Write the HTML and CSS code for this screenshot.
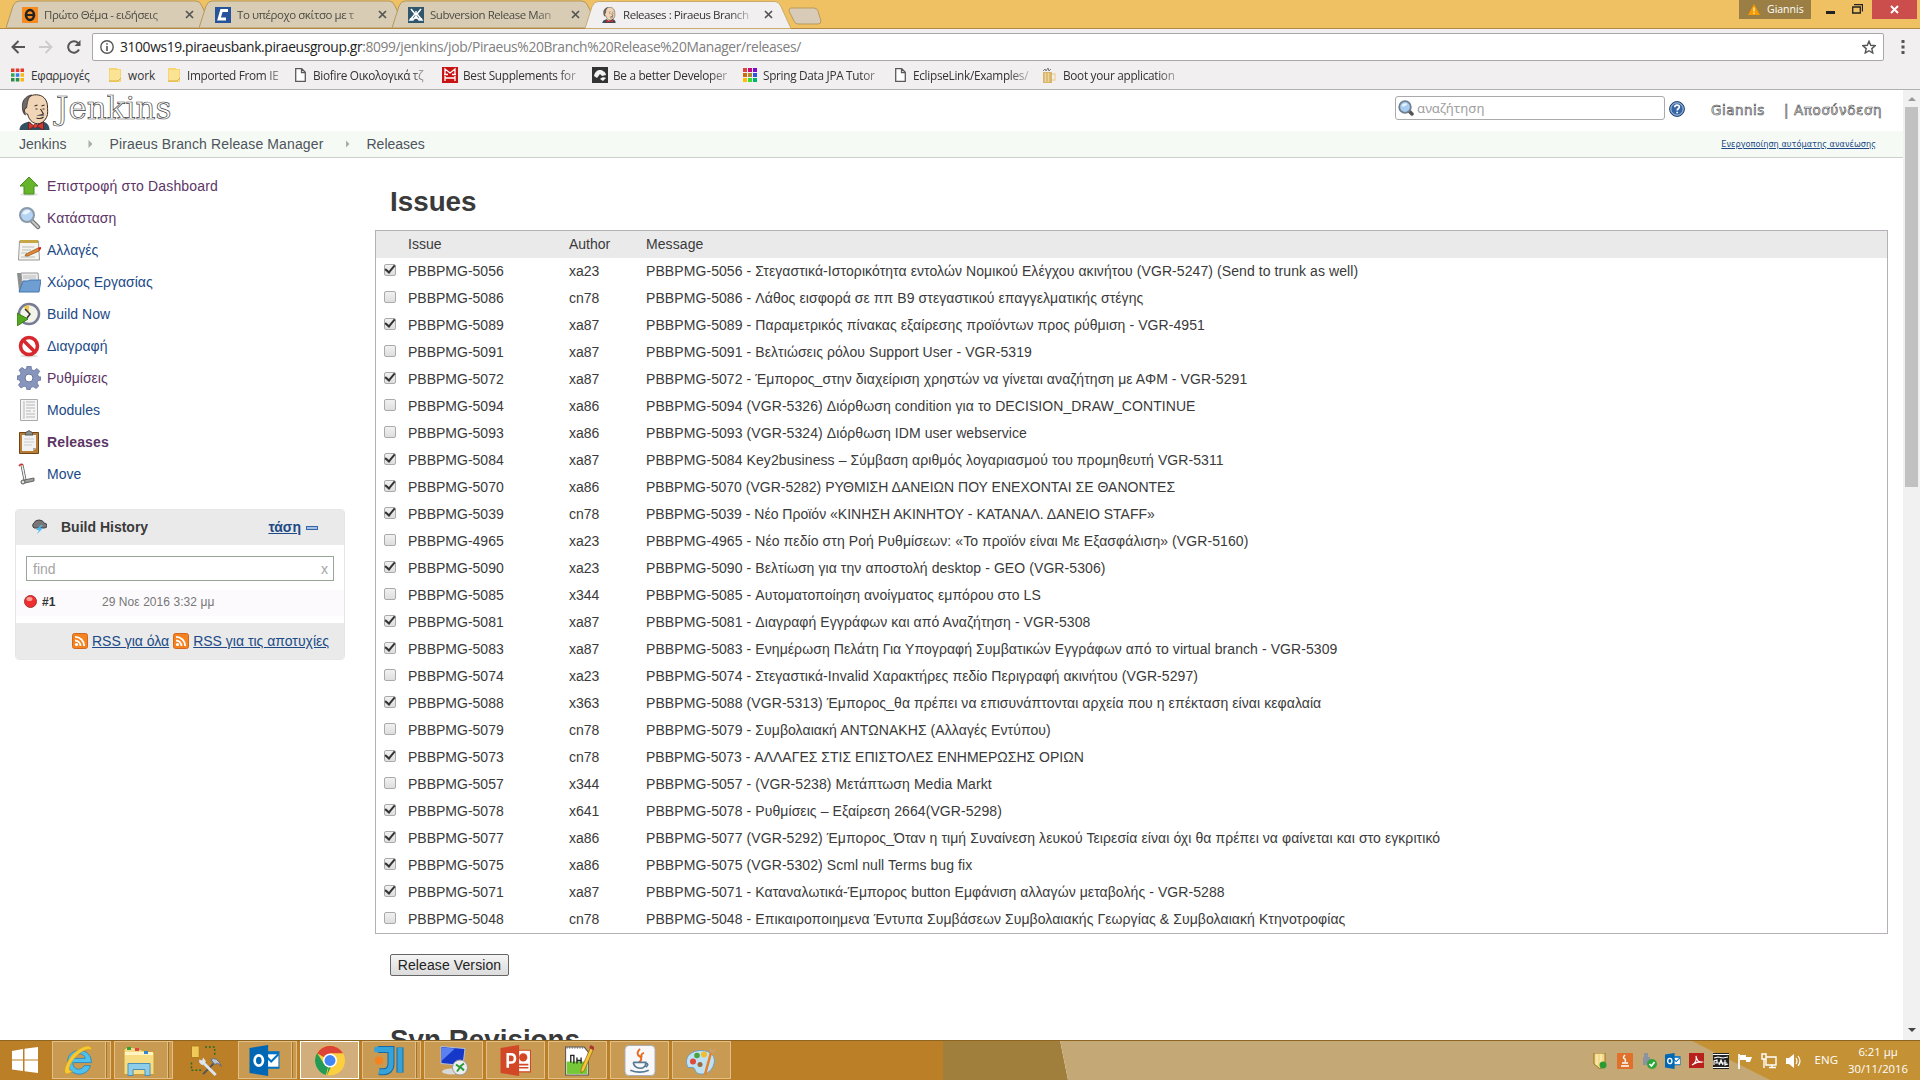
FILE: index.html
```html
<!DOCTYPE html>
<html lang="el">
<head>
<meta charset="utf-8">
<title>Releases : Piraeus Branch Release Manager</title>
<link rel="stylesheet" href="styles.css">
</head>
<body>
<svg width="0" height="0" class="defs" aria-hidden="true">
  <defs>
    <symbol id="head" viewBox="0 0 32 36"><path d="M1 36c0-5 4-7 8-8l14-1c5 1 8 4 8 9z" fill="#335061"/><path d="M11 27l5 7 6-7z" fill="#fff"/><path d="M7 8C9 2 15 0 20 1c6 1 9 6 9 12 0 4 1 8-2 12-3 5-9 6-13 3-3-2-4-5-5-8-3 0-4-4-2-6z" fill="#f0d6b7" stroke="#3a2c24" stroke-width="1"/><path d="M4 14C3 7 7 2 13 1 9 4 9 9 8 14c-3 0-3 4-1 7-2-1-3-4-3-7z" fill="#6d6b6d" stroke="#3a2c24" stroke-width=".8"/><path d="M16 12l3-1M23 12l3-1M17 15h2M24 15h2M22 15l3 5-3 1M18 24c3 1 5 1 7-1" fill="none" stroke="#3a2c24" stroke-width="1.1"/><path d="M18 22c2-2 6-2 8 0z" fill="#6d6b6d"/><path d="M16 32l-6-4v8zM18 32l7-4v8z" fill="#d33833" stroke="#5a1512" stroke-width=".6"/><circle cx="17" cy="32" r="2" fill="#ef3d3a" stroke="#5a1512" stroke-width=".6"/></symbol>
    <symbol id="tab" viewBox="0 0 206 28"><path d="M0 28L7 6Q9 1 13 1H190Q194 1 196 6L206 28Z"/></symbol>
    <symbol id="folder" viewBox="0 0 12 14"><path d="M0 0h8v1h4v13H0z" fill="#f5d672"/><path d="M1 2h10v11H1z" fill="#fbe396"/><path d="M0 13h9l3-3" fill="none" stroke="#d9ae3c"/></symbol>
    <symbol id="page" viewBox="0 0 11 14"><path d="M.7.7h6l3.6 3.6v9H.7z M6.5.7v4h4" fill="#fff" stroke="#5a5a5a" stroke-width="1.3"/></symbol>
    <symbol id="lens" viewBox="0 0 24 24"><path d="M15 15l6 6" stroke="#777" stroke-width="4.5" stroke-linecap="round"/><path d="M15 15l6 6" stroke="#c8c8c8" stroke-width="2" stroke-linecap="round"/><circle cx="10" cy="9" r="7" fill="#b5d3f3" stroke="#8a9aa8" stroke-width="2"/><path d="M5.500 8a5 5 0 0 1 8-3c-2 3-5 4-8 3z" fill="#e9f4ff"/></symbol>
    <symbol id="smalllens" viewBox="0 0 16 16"><path d="M10 10l4 4" stroke="#555" stroke-width="3.500" stroke-linecap="round"/><circle cx="7" cy="7" r="5.800" fill="#a9cdf2" stroke="#6f7f8d" stroke-width="1.800"/><path d="M3.500 6a4 4 0 0 1 6-2c-2 2-4 3-6 2z" fill="#e9f4ff"/></symbol>
    <symbol id="rss" viewBox="0 0 16 16"><rect x=".5" y=".5" width="15" height="15" rx="2" fill="#f58220" stroke="#d2691e"/><circle cx="4.500" cy="11.500" r="1.600" fill="#fff"/><path d="M3 7.500a5.500 5.500 0 0 1 5.500 5.500M3 3.800A9.200 9.200 0 0 1 12.200 13" fill="none" stroke="#fff" stroke-width="1.800"/></symbol>
    <symbol id="mailbox" viewBox="0 0 30 30"><path d="M13 6h16v17H13z" fill="#0072c6"/><path d="M14 9h14v12H14z" fill="#fff"/><path d="M15 10l6 6 7-7" fill="none" stroke="#0072c6" stroke-width="2"/><path d="M0 3L18 0v30L0 27z" fill="#0067b5"/><ellipse cx="9" cy="15" rx="4" ry="5" fill="none" stroke="#fff" stroke-width="2.600"/></symbol>
  </defs>
</svg>

<header class="strip">
  <div class="tabs">
    <div class="tab"><svg class="shape"><use href="#tab"/></svg><svg class="fav" viewBox="0 0 16 16"><rect width="16" height="16" fill="#f78b1f"/><ellipse cx="8" cy="8" rx="4" ry="5" fill="none" stroke="#222" stroke-width="2.600"/><path d="M4 8h8" stroke="#222" stroke-width="2"/></svg><span class="title">Πρώτο Θέμα - ειδήσεις</span><svg class="close" viewBox="0 0 9 9"><path d="M1 1l7 7M8 1L1 8"/></svg></div>
    <div class="tab"><svg class="shape"><use href="#tab"/></svg><svg class="fav" viewBox="0 0 16 16"><rect width="16" height="16" fill="#27539b"/><path d="M13 3.500H6.500L4 12h7" fill="none" stroke="#fff" stroke-width="2.800"/></svg><span class="title">Το υπέροχο σκίτσο με τ</span><svg class="close" viewBox="0 0 9 9"><path d="M1 1l7 7M8 1L1 8"/></svg></div>
    <div class="tab"><svg class="shape"><use href="#tab"/></svg><svg class="fav" viewBox="0 0 16 16"><rect width="16" height="16" fill="#2f566c"/><path d="M3 2l4 5-5 6h3l3-4 3 4h3L9 7l4-5M8 4v8M2 12l3-1M14 12l-3-1" fill="none" stroke="#fff" stroke-width="1.500"/></svg><span class="title">Subversion Release Man</span><svg class="close" viewBox="0 0 9 9"><path d="M1 1l7 7M8 1L1 8"/></svg></div>
    <div class="tab active"><svg class="shape"><use href="#tab"/></svg><svg class="fav"><use href="#head"/></svg><span class="title">Releases : Piraeus Branch</span><svg class="close" viewBox="0 0 9 9"><path d="M1 1l7 7M8 1L1 8"/></svg></div>
    <svg class="newtab" viewBox="0 0 34 18"><path d="M3 1h23q3 0 4 3l3 10q0 3-3 3H10q-3 0-4-3L1 4q0-3 2-3z" fill="#d8ccb8" stroke="#b79a5c"/></svg>
  </div>
  <div class="wincontrols">
    <div class="profile"><svg viewBox="0 0 12 11"><path d="M6 0l6 11H0z" fill="#f79a00"/><path d="M6 3.500v4M6 8.500v1.500" stroke="#fff3c0" stroke-width="1.300"/></svg><span>Giannis</span></div>
    <svg class="min" viewBox="0 0 9 3"><path d="M0 0h9v3H0z" fill="#222"/></svg>
    <svg class="restore" viewBox="0 0 11 10"><path d="M2 .5h8.500v7M.7 3h7.600v6H.7z" fill="none" stroke="#222" stroke-width="1.300"/></svg>
    <div class="winclose"><svg viewBox="0 0 9 9"><path d="M1 1l7 7M8 1L1 8" stroke="#fff" stroke-width="1.900"/></svg></div>
  </div>
</header>

<div class="toolbar">
  <svg class="nav" viewBox="0 0 14 14"><path d="M14 7H2M7.500 1L1.500 7l6 6" fill="none" stroke="#555" stroke-width="2"/></svg>
  <svg class="nav" viewBox="0 0 14 14"><path d="M0 7h12M6.500 1l6 6-6 6" fill="none" stroke="#ccc" stroke-width="1.800"/></svg>
  <svg class="nav" viewBox="0 0 14 14"><path d="M12 9.500A5.700 5.700 0 1 1 11 3" fill="none" stroke="#555" stroke-width="2"/><path d="M13.500 0v6h-6z" fill="#555"/></svg>
  <div class="omnibox">
    <svg class="info" viewBox="0 0 14 14"><circle cx="7" cy="7" r="6.200" fill="none" stroke="#555" stroke-width="1.400"/><path d="M7 6v5M7 3.200v1.600" stroke="#555" stroke-width="1.600"/></svg>
    <span class="url"><b>3100ws19.piraeusbank.piraeusgroup.gr</b>:8099/jenkins/job/Piraeus%20Branch%20Release%20Manager/releases/</span>
    <svg class="star" viewBox="0 0 14 14"><path d="M7 1.200l1.700 4.100 4.500.4-3.400 2.900 1 4.400L7 10.700 3.200 13l1-4.400L.8 5.700l4.500-.4z" fill="none" stroke="#555" stroke-width="1.400"/></svg>
  </div>
  <svg class="menu" viewBox="0 0 4 14"><path d="M.5 0h3v3h-3zM.5 5.500h3v3h-3zM.5 11h3v3h-3z" fill="#555"/></svg>
</div>

<nav class="bookmarks">
  <a class="m1"><svg viewBox="0 0 13 13"><path d="M0 0h3.500v3.500H0zM4.800 0h3.500v3.500H4.800zM9.500 0H13v3.500H9.500z" fill="#e33b2e"/><path d="M0 4.800h3.500v3.500H0z" fill="#2da94f"/><path d="M4.800 4.800h3.500v3.500H4.800z" fill="#3b7ded"/><path d="M9.500 4.800H13v3.500H9.500zM9.500 9.500H13V13H9.500z" fill="#f6b913"/><path d="M0 9.500h3.500V13H0zM4.800 9.500h3.500V13H4.800z" fill="#2d8f47"/></svg><span>Εφαρμογές</span></a>
  <a class="m2"><svg><use href="#folder"/></svg><span>work</span></a>
  <a class="m3"><svg><use href="#folder"/></svg><span>Imported From IE</span></a>
  <a class="m4"><svg><use href="#page"/></svg><span>Biofire Οικολογικά τζ</span></a>
  <a class="m5"><svg viewBox="0 0 16 16"><rect width="16" height="16" fill="#c81414"/><path d="M3 7V2l5 4 5-4v5M3 9v5M13 9v5M3 11h10M2 7.500h4M10 7.500h4" fill="none" stroke="#fff" stroke-width="1.300"/></svg><span>Best Supplements for</span></a>
  <a class="m6"><svg viewBox="0 0 16 16"><rect width="16" height="16" fill="#333"/><path d="M2 9c1-5 4-6 6-6s6 2 6 5l-4 1-2-2-3 4zM8 12c2-2 4-2 6-1l-3 3z" fill="#f2f2f2"/></svg><span>Be a better Developer</span></a>
  <a class="m7"><svg viewBox="0 0 14 14"><path d="M0 0h4v4H0z" fill="#e34040"/><path d="M5 0h4v4H5z" fill="#c60b7a"/><path d="M10 0h4v4h-4z" fill="#7a0bd0"/><path d="M0 5h4v4H0z" fill="#cc6b14"/><path d="M5 5h4v4H5z" fill="#b08a30"/><path d="M10 5h4v4h-4z" fill="#3253e0"/><path d="M0 10h4v4H0z" fill="#ffbf00"/><path d="M5 10h4v4H5z" fill="#3cdc32"/><path d="M10 10h4v4h-4z" fill="#00b46e"/></svg><span>Spring Data JPA Tutor</span></a>
  <a class="m8"><svg><use href="#page"/></svg><span>EclipseLink/Examples/</span></a>
  <a class="m9"><svg viewBox="0 0 15 16"><path d="M1 5h9v11H1z" fill="#d8b56b"/><path d="M10 7h3v6h-3M3.500 6v9M6.500 6v9" fill="none" stroke="#ecd6a2" stroke-width="1.500"/><path d="M1 4l2-2 1 2 2-3 1 3 2-2" fill="none" stroke="#777"/></svg><span>Boot your application</span></a>
</nav>

<div class="viewport">
  <div class="page">
    <div class="topbar">
      <svg class="logo"><use href="#head"/></svg>
      <span class="brand">Jenkins</span>
      <div class="search"><svg><use href="#smalllens"/></svg><span>αναζήτηση</span></div>
      <svg class="help" viewBox="0 0 16 16"><circle cx="8" cy="8" r="7.400" fill="#3465a4" stroke="#1d3f72"/><circle cx="8" cy="8" r="6.200" fill="none" stroke="#d6e2f2" stroke-width=".8"/><path d="M5.800 6.300c0-3 4.500-2.800 4.500-.2 0 1.700-2.100 1.600-2.100 3.300M8.200 10.700v1.600" fill="none" stroke="#fff" stroke-width="1.700"/></svg>
      <a class="user">Giannis</a>
      <a class="logout">| Αποσύνδεση</a>
    </div>
    <div class="crumbs">
      <a>Jenkins</a><i></i><a class="job">Piraeus Branch Release Manager</a><i></i><a>Releases</a>
      <a class="refresh">Ενεργοποίηση αυτόματης ανανέωσης</a>
    </div>
    <div class="columns">
      <aside>
        <ul class="tasks">
          <li class="seen wide"><svg viewBox="0 0 24 24"><ellipse cx="12" cy="20.500" rx="9" ry="1.500" fill="#ddd"/><path d="M12 3l9 9h-4v8H7v-8H3z" fill="#66b52c" stroke="#4a8f1c"/></svg>Επιστροφή στο Dashboard</li>
          <li class="seen"><svg><use href="#lens"/></svg>Κατάσταση</li>
          <li><svg viewBox="0 0 24 24"><path d="M2.500 3h19l1 19H1.500z" fill="#f4f4ef" stroke="#999"/><path d="M3 2h18v3H3z" fill="#c7a646"/><path d="M5 9h12M5 12h9M4 15h6M4 19h14" stroke="#bbb"/><path d="M9 16l12-6 2 1-1 2-11 5-3 0z" fill="#e08a35" stroke="#8a5120" stroke-width=".7"/><path d="M21 9.500l3-.5v2l-2 1.500z" fill="#d22"/></svg>Αλλαγές</li>
          <li><svg viewBox="0 0 24 24"><path d="M0 3h7l2 2v16H2z" fill="#8c8f8d"/><path d="M4 3h17l1 11H5z" fill="#eee" stroke="#999"/><path d="M6 6h13M6 8h13" stroke="#bbb"/><path d="M6 11h5l2-1h11l-2 12H2z" fill="#6f9fd2" stroke="#4577ad"/></svg>Χώρος Εργασίας</li>
          <li><svg viewBox="0 0 24 24"><circle cx="12" cy="12" r="10" fill="#f3f3ec" stroke="#777b93" stroke-width="2.500"/><path d="M12 12L7 5a8 8 0 0 1 5-2z" fill="#efc84a"/><path d="M8 7l5 5-3 4" fill="none" stroke="#333" stroke-width="1.500"/><path d="M0 11l11 6L0 24z" fill="#52a820" stroke="#3b7d14"/></svg>Build Now</li>
          <li><svg viewBox="0 0 24 24"><ellipse cx="12" cy="22" rx="9" ry="1.500" fill="#ddd"/><circle cx="12" cy="12" r="8.500" fill="#fff" stroke="#d7282d" stroke-width="3.600"/><path d="M6 6l12 12" stroke="#d7282d" stroke-width="3.600"/></svg>Διαγραφή</li>
          <li class="seen"><svg viewBox="0 0 24 24"><path d="M10 0h4l.6 3.700 2.400 1 3-2.200 2.700 2.800-2.100 3 1 2.400L24 11v3l-3 .6-1 2.400 1.700 3-2.600 2.400-3-1.800-2.300.9L13 24h-3l-.6-3-2.400-.9-3 1.900L1.500 19l2-2.700-.9-2.300L0 13.500V10l3-.5 1-2.400-2-3L5 1.500l2.700 2 1.800-.7z" fill="#8795bd" stroke="#66759e" stroke-width=".8"/><circle cx="12" cy="12" r="4" fill="#fff" stroke="#66759e"/></svg>Ρυθμίσεις</li>
          <li><svg viewBox="0 0 24 24"><path d="M3.500 1.500h17v21h-17z" fill="#f5f5f5" stroke="#aaa"/><path d="M6 4h1v16H6M9 4h9M9 7h9M9 10h9M9 13h5M9 16h9M9 19h9M16 13h2" fill="none" stroke="#ccc" stroke-width="1.500"/></svg>Modules</li>
          <li class="seen current"><svg viewBox="0 0 24 24"><path d="M2.500 2.500h19v21h-19z" fill="#b77d36" stroke="#6f4512"/><path d="M5 5h14v13l-3 3H5z" fill="#f2f2f2"/><path d="M7 9h10M7 12h10M7 15h8" stroke="#ccc"/><path d="M8 5l1-3h1q2-3 4 0h1l1 3z" fill="#888f88" stroke="#555"/><path d="M19 18h-3v3z" fill="#aaa"/></svg>Releases</li>
          <li><svg viewBox="0 0 24 24"><path d="M5 3l3 15" stroke="#555" stroke-width="3"/><path d="M5 3l3 15" stroke="#eee" stroke-width="1.500"/><path d="M2 4q2-3 4-1" fill="none" stroke="#c33" stroke-width="1.500"/><path d="M7 18l10-2v3l-9 2z" fill="#9ba39b" stroke="#666"/><circle cx="6" cy="20" r="2" fill="#ddd" stroke="#555"/></svg>Move</li>
        </ul>
        <section class="history">
          <div class="hhead"><svg class="storm" viewBox="0 0 16 16"><path d="M3 9a3 3 0 0 1 0-5q1-3 5-3 4 0 5 3 3 0 3 3 0 2-3 2z" fill="#777" stroke="#444"/><path d="M10 6l-5 5h3l-2 4 6-6H9l3-3z" fill="#4db9f2"/></svg><b>Build History</b><a>τάση</a><i class="dash"></i></div>
          <div class="find"><span>find</span><span>x</span></div>
          <div class="build"><svg viewBox="0 0 13 13"><circle cx="6.500" cy="6.500" r="6" fill="#ef2f2f" stroke="#a33"/><ellipse cx="5.500" cy="4" rx="3" ry="2" fill="#ff9d94"/></svg><b>#1</b><span>29 Νοε 2016 3:32 μμ</span></div>
          <div class="feeds"><svg><use href="#rss"/></svg><a>RSS για όλα</a><svg><use href="#rss"/></svg><a>RSS για τις αποτυχίες</a></div>
        </section>
      </aside>
      <main>
        <h1>Issues</h1>
        <div class="table">
          <div class="row th"><i></i><span>Issue</span><span>Author</span><span>Message</span></div>
          <div class="row"><i class="on"></i><span>PBBPMG-5056</span><span>xa23</span><span>PBBPMG-5056 - Στεγαστικά-Ιστορικότητα εντολών Νομικού Ελέγχου ακινήτου (VGR-5247) (Send to trunk as well)</span></div>
          <div class="row"><i class="off"></i><span>PBBPMG-5086</span><span>cn78</span><span>PBBPMG-5086 - Λάθος εισφορά σε ππ Β9 στεγαστικού επαγγελματικής στέγης</span></div>
          <div class="row"><i class="on"></i><span>PBBPMG-5089</span><span>xa87</span><span>PBBPMG-5089 - Παραμετρικός πίνακας εξαίρεσης προϊόντων προς ρύθμιση - VGR-4951</span></div>
          <div class="row"><i class="off"></i><span>PBBPMG-5091</span><span>xa87</span><span>PBBPMG-5091 - Βελτιώσεις ρόλου Support User - VGR-5319</span></div>
          <div class="row"><i class="on"></i><span>PBBPMG-5072</span><span>xa87</span><span>PBBPMG-5072 - Έμπορος_στην διαχείριση χρηστών να γίνεται αναζήτηση με ΑΦΜ - VGR-5291</span></div>
          <div class="row"><i class="off"></i><span>PBBPMG-5094</span><span>xa86</span><span>PBBPMG-5094 (VGR-5326) Διόρθωση condition για το DECISION_DRAW_CONTINUE</span></div>
          <div class="row"><i class="off"></i><span>PBBPMG-5093</span><span>xa86</span><span>PBBPMG-5093 (VGR-5324) Διόρθωση IDM user webservice</span></div>
          <div class="row"><i class="on"></i><span>PBBPMG-5084</span><span>xa87</span><span>PBBPMG-5084 Key2business – Σύμβαση αριθμός λογαριασμού του προμηθευτή VGR-5311</span></div>
          <div class="row"><i class="on"></i><span>PBBPMG-5070</span><span>xa86</span><span class="caps">PBBPMG-5070 (VGR-5282) ΡΥΘΜΙΣΗ ΔΑΝΕΙΩΝ ΠΟΥ ΕΝΕΧΟΝΤΑΙ ΣΕ ΘΑΝΟΝΤΕΣ</span></div>
          <div class="row"><i class="on"></i><span>PBBPMG-5039</span><span>cn78</span><span class="caps">PBBPMG-5039 - Νέο Προϊόν «ΚΙΝΗΣΗ ΑΚΙΝΗΤΟΥ - ΚΑΤΑΝΑΛ. ΔΑΝΕΙΟ STAFF»</span></div>
          <div class="row"><i class="off"></i><span>PBBPMG-4965</span><span>xa23</span><span>PBBPMG-4965 - Νέο πεδίο στη Ροή Ρυθμίσεων: «Το προϊόν είναι Με Εξασφάλιση» (VGR-5160)</span></div>
          <div class="row"><i class="on"></i><span>PBBPMG-5090</span><span>xa23</span><span>PBBPMG-5090 - Βελτίωση για την αποστολή desktop - GEO (VGR-5306)</span></div>
          <div class="row"><i class="off"></i><span>PBBPMG-5085</span><span>x344</span><span>PBBPMG-5085 - Αυτοματοποίηση ανοίγματος εμπόρου στο LS</span></div>
          <div class="row"><i class="on"></i><span>PBBPMG-5081</span><span>xa87</span><span>PBBPMG-5081 - Διαγραφή Εγγράφων και από Αναζήτηση - VGR-5308</span></div>
          <div class="row"><i class="on"></i><span>PBBPMG-5083</span><span>xa87</span><span>PBBPMG-5083 - Ενημέρωση Πελάτη Για Υπογραφή Συμβατικών Εγγράφων από το virtual branch - VGR-5309</span></div>
          <div class="row"><i class="off"></i><span>PBBPMG-5074</span><span>xa23</span><span>PBBPMG-5074 - Στεγαστικά-Invalid Χαρακτήρες πεδίο Περιγραφή ακινήτου (VGR-5297)</span></div>
          <div class="row"><i class="on"></i><span>PBBPMG-5088</span><span>x363</span><span>PBBPMG-5088 (VGR-5313) Έμπορος_θα πρέπει να επισυνάπτονται αρχεία που η επέκταση είναι κεφαλαία</span></div>
          <div class="row"><i class="off"></i><span>PBBPMG-5079</span><span>cn78</span><span>PBBPMG-5079 - Συμβολαιακή ΑΝΤΩΝΑΚΗΣ (Αλλαγές Εντύπου)</span></div>
          <div class="row"><i class="on"></i><span>PBBPMG-5073</span><span>cn78</span><span class="caps">PBBPMG-5073 - ΑΛΛΑΓΕΣ ΣΤΙΣ ΕΠΙΣΤΟΛΕΣ ΕΝΗΜΕΡΩΣΗΣ ΟΡΙΩΝ</span></div>
          <div class="row"><i class="off"></i><span>PBBPMG-5057</span><span>x344</span><span>PBBPMG-5057 - (VGR-5238) Μετάπτωση Media Markt</span></div>
          <div class="row"><i class="on"></i><span>PBBPMG-5078</span><span>x641</span><span>PBBPMG-5078 - Ρυθμίσεις – Εξαίρεση 2664(VGR-5298)</span></div>
          <div class="row"><i class="on"></i><span>PBBPMG-5077</span><span>xa86</span><span>PBBPMG-5077 (VGR-5292) Έμπορος_Όταν η τιμή Συναίνεση λευκού Τειρεσία είναι όχι θα πρέπει να φαίνεται και στο εγκριτικό</span></div>
          <div class="row"><i class="on"></i><span>PBBPMG-5075</span><span>xa86</span><span>PBBPMG-5075 (VGR-5302) Scml null Terms bug fix</span></div>
          <div class="row"><i class="on"></i><span>PBBPMG-5071</span><span>xa87</span><span>PBBPMG-5071 - Καταναλωτικά-Έμπορος button Εμφάνιση αλλαγών μεταβολής - VGR-5288</span></div>
          <div class="row"><i class="off"></i><span>PBBPMG-5048</span><span>cn78</span><span>PBBPMG-5048 - Επικαιροποιημενα Έντυπα Συμβάσεων Συμβολαιακής Γεωργίας &amp; Συμβολαιακή Κτηνοτροφίας</span></div>
        </div>
        <button class="release" type="button">Release Version</button>
        <h1 class="svn">Svn Revisions</h1>
      </main>
    </div>
  </div>
  <div class="scroll">
    <svg viewBox="0 0 8 4"><path d="M4 0l4 4H0z" fill="#999"/></svg>
    <div class="thumb"></div>
    <svg class="down" viewBox="0 0 8 4"><path d="M0 0h8L4 4z" fill="#444"/></svg>
  </div>
</div>

<footer class="taskbar">
  <svg class="wallpaper" viewBox="0 0 1920 40" preserveAspectRatio="none"><path d="M0 0h943v40H0z" fill="#bb7f27"/><path d="M943 0h117l8 40H943z" fill="#a07f3c"/><path d="M1060 0h636l79 40h-707z" fill="#c4a876"/><path d="M1690 0h230v40h-150z" fill="#c49235"/><path d="M0 0h1920v1H0z" fill="#8d6420"/></svg>
  <div class="start"><svg viewBox="0 0 26 26"><path d="M0 4l11-2v10.500H0zM12.500 1.700L26 0v12.500H12.500zM0 13.500h11V24L0 22.500zM12.500 13.500H26V26l-13.500-1.700z" fill="#fff"/></svg></div>
  <div class="apps">
    <div class="app stack"><svg viewBox="0 0 30 30"><path d="M27 17H9c0 8 9 8 11 3h6c-3 12-22 11-22-4C4 2 27 1 27 17zM10 13h11c-1-6-10-6-11 0z" fill="#4fc1ee" stroke="#2386bd" stroke-width=".8"/><path d="M27 5c1-7-10-4-18 4C2 17-1 27 3 28c2 0 4-1 6-3-4 1-5-3 0-10C14 8 23 2 27 5z" fill="#f9c932" stroke="#c9971c" stroke-width=".5"/></svg></div>
    <div class="app stack double"><svg viewBox="0 0 32 30"><path d="M1 4l4-3 9 2 6 2 11 2v22H1z" fill="#f6dd83" stroke="#c59c38"/><path d="M2 8h28" stroke="#fff4c2" stroke-width="3"/><path d="M4 3h4" stroke="#35a040" stroke-width="3"/><path d="M12 4h4" stroke="#d44" stroke-width="3"/><path d="M21 7h4" stroke="#38c" stroke-width="3"/><path d="M5 30V18h22v12h-5v-6H10v6z" fill="#8dcdea" stroke="#4c91b5"/></svg></div>
    <div class="app flat"><svg viewBox="0 0 32 32"><path d="M1 1h8v12H1z" fill="#f1c95b" stroke="#a87b1c"/><path d="M15 2h10v10M1 18v8h10" fill="none" stroke="#276b25" stroke-width="1.500" stroke-dasharray="2"/><path d="M13 30l14-14" stroke="#555" stroke-width="2"/><path d="M12 17l14 14" stroke="#dce6ef" stroke-width="3"/><path d="M21 15q6-4 11 7l-4-3-3 1z" fill="#b6c8d8" stroke="#667"/><path d="M9 15l3 1 1-3 3 4-4 4-3-3z" fill="#dce6ef"/></svg></div>
    <div class="app stack"><svg><use href="#mailbox"/></svg></div>
    <div class="app current"><svg viewBox="0 0 30 30"><circle cx="15" cy="15" r="14.500" fill="#fbcf3d"/><path d="M15 15L2.500 8A14.500 14.500 0 0 1 27.600 8H15z" fill="#db4437"/><path d="M15 15l-4 14A14.500 14.500 0 0 1 2.500 7.700L9 18l7 3-4 8.500z" fill="#239a55"/><circle cx="15" cy="15" r="6.800" fill="#fff"/><circle cx="15" cy="15" r="5.300" fill="#4285f4"/></svg></div>
    <div class="app stack"><svg viewBox="0 0 32 30"><path d="M5 4h13v14q0 10-12 8M27 2v25" fill="none" stroke="#176aa5" stroke-width="7"/><path d="M5 4h13v14q0 10-12 8M27 2v25" fill="none" stroke="#35a2da" stroke-width="5"/><circle cx="6" cy="15" r="4" fill="#f6821f"/><circle cx="4" cy="4" r="3" fill="#35a2da"/></svg></div>
    <div class="app"><svg viewBox="0 0 32 30"><ellipse cx="13" cy="26" rx="9" ry="3" fill="#d8d8d8"/><path d="M3 1l24 2-2 17-22-2z" fill="#1638c8" stroke="#b9c2d6"/><path d="M4 2l13 1L4 15z" fill="#5b80f0"/><circle cx="22" cy="22" r="7.500" fill="#eee" stroke="#999"/><path d="M18 19l4 3-3 4M26 18l-4 3 4 4" fill="none" stroke="#2b9b3b" stroke-width="2"/></svg></div>
    <div class="app"><svg viewBox="0 0 30 30"><path d="M14 5h15v21H14z" fill="#fff" stroke="#d24726"/><circle cx="22" cy="12" r="4" fill="#d24726"/><path d="M18 19h9M18 22h9" stroke="#d24726" stroke-width="1.500"/><path d="M0 3L18 0v30L0 27z" fill="#d24726"/><path d="M7 22V9h3q4 0 4 4t-4 4H7" fill="none" stroke="#fff" stroke-width="2.500"/></svg></div>
    <div class="app"><svg viewBox="0 0 30 30"><path d="M3 2h18l4 5v22H3z" fill="#fff" stroke="#555"/><path d="M4 16h20v12H4z" fill="#76c936"/><path d="M4 3h16" stroke="#444" stroke-dasharray="1 1.500"/><path d="M8 17v-7h3v8M14 12v6M14 15h4M18 12v6" fill="none" stroke="#222" stroke-width="1.300"/><path d="M27 3l3 1-9 21-3 2v-4z" fill="#f5c43a" stroke="#8a6512" stroke-width=".7"/><path d="M27 0l4 2-1 3-4-2z" fill="#a33"/></svg></div>
    <div class="app"><svg viewBox="0 0 32 32"><rect x=".5" y=".5" width="31" height="31" rx="4" fill="#f8f8fa" stroke="#a9aab5"/><path d="M16 4q-5 5 0 8 3 3-1 6M20 8q-4 2-2 5" fill="none" stroke="#e86a1e" stroke-width="2"/><path d="M9 18h13q0 6-6 6t-7-6M22 19q4 0 0 4M6 26q10 4 19 0" fill="none" stroke="#527a95" stroke-width="1.700"/></svg></div>
    <div class="app"><svg viewBox="0 0 32 30"><path d="M2 22C-3 12 5 5 15 5c10 0 15 6 13 13-2 9-10 12-16 10-4-2-2-6-6-6z" fill="#bfe1f4" stroke="#6f9fbd"/><circle cx="7" cy="16" r="3" fill="#e04a3b"/><circle cx="11" cy="10" r="2.800" fill="#48a23f"/><circle cx="18" cy="9" r="3" fill="#f3bd2b"/><circle cx="14" cy="19" r="2.500" fill="#9a6a3a"/><path d="M25 7l-6 22" stroke="#e87f25" stroke-width="2.500"/><path d="M23 0l3 5 4-2-3 5-3-1z" fill="#caa06b"/></svg></div>
  </div>
  <div class="tray">
    <svg viewBox="0 0 16 16"><path d="M1 0h11v12l-5 4-6-5z" fill="#f5d98a" stroke="#9a7420"/><path d="M4 1v11M8 1v12" stroke="#fff3c9"/><circle cx="10" cy="12" r="3.500" fill="#2c9a33"/></svg>
    <svg viewBox="0 0 16 16"><rect width="16" height="16" rx="1" fill="#e0702a"/><path d="M8 2q-3 3 0 4 1 1 0 3M5 10h6M4 13h8" fill="none" stroke="#fff" stroke-width="1.400"/></svg>
    <svg viewBox="0 0 16 16"><path d="M3 0h4v4h2v5l-3 3H2V4h1z" fill="#8b93a0"/><circle cx="11" cy="11" r="5" fill="#2ea53a"/><path d="M8.500 11l2 2 3-4" fill="none" stroke="#fff" stroke-width="1.700"/></svg>
    <svg><use href="#mailbox"/></svg>
    <svg viewBox="0 0 16 16"><rect width="15" height="15" fill="#b8201c"/><path d="M3 12c4-2 5-6 4-9 1 5 3 7 6 6-4-1-7 1-10 3z" fill="none" stroke="#fff" stroke-width="1.200"/></svg>
    <svg viewBox="0 0 16 16"><rect width="16" height="16" fill="#222"/><path d="M0 1.500h16M0 14.500h16M1 5l4-1 5 1 5-1M1 12V8l3-1v3M6 12l2-5 2 5M12 7v5l3-1M2 10h12" fill="none" stroke="#fff" stroke-width="1.200"/></svg>
    <svg viewBox="0 0 16 16"><path d="M2 1v15" stroke="#fff" stroke-width="1.700"/><path d="M3 2h6v2h6l-2 5H9V7H3z" fill="#fff"/></svg>
    <svg viewBox="0 0 16 16"><path d="M5 4h10v8H5zM8 14.500h7M11 12v3M1 1h4v5H1zM3 6v9" fill="none" stroke="#fff" stroke-width="1.400"/></svg>
    <svg viewBox="0 0 16 16"><path d="M1 5h3l5-4v14l-5-4H1z" fill="#fff"/><path d="M11 5q2 3 0 6M13 3q4 5 0 10" fill="none" stroke="#fff" stroke-width="1.200"/></svg>
    <span class="lang">ENG</span>
    <div class="clock"><span>6:21 μμ</span><span>30/11/2016</span></div>
  </div>
</footer>
</body>
</html>
```
FILE: styles.css
```css
* { box-sizing: border-box; }
body {
  margin: 0;
  width: 1920px;
  height: 1080px;
  overflow: hidden;
  display: flex;
  flex-direction: column;
  background: #fff;
  color: #3a3a3a;
  font: 14px/1 "Liberation Sans", Arial, sans-serif;
}
svg { display: block; flex: none; }
.defs { position: absolute; }
i { font-style: normal; }

/* window frame */
.strip {
  height: 29px;
  flex: none;
  display: flex;
  justify-content: space-between;
  background: #f0c163;
  border-bottom: 1px solid #b08a45;
  font: 12px/1 "Open Sans", "Noto Sans", sans-serif;
}
.tabs { display: flex; padding-left: 6px; }
.tab {
  position: relative;
  width: 193px;
  height: 29px;
  display: flex;
  align-items: center;
  padding: 0 0 0 16px;
  color: #4c4a45;
}
.shape {
  position: absolute;
  left: 0;
  top: 0;
  width: 206px;
  height: 28px;
  fill: #d8cdb4;
  stroke: #b6975a;
  overflow: visible;
}
.active { color: #333; }
.active .shape { fill: #f1eff0; height: 29px; stroke: #c9ab6b; }
.fav { position: relative; width: 16px; height: 16px; margin-right: 6px; }
.title {
  position: relative;
  width: 130px;
  white-space: nowrap;
  line-height: 18px;
  font-size: 11.500px;
  letter-spacing: -.45px;
  mask-image: linear-gradient(90deg, #000 82%, rgba(0, 0, 0, .25) 97%);
}
.close { position: relative; width: 9px; height: 9px; margin-left: 11px; stroke: #555; stroke-width: 1.700; }
.newtab { width: 34px; height: 18px; margin: 7px 0 0 10px; }
.wincontrols { display: flex; align-items: flex-start; padding-right: 3px; }
.profile {
  width: 72px;
  height: 19px;
  display: flex;
  align-items: center;
  padding-left: 9px;
  gap: 7px;
  background: #9b7e43;
  color: #fff;
  font-size: 10.500px;
}
.profile svg { width: 12px; height: 11px; }
.min { width: 9px; height: 3px; margin: 11px 0 0 15px; }
.restore { width: 11px; height: 10px; margin: 4px 0 0 17px; }
.winclose {
  width: 45px;
  height: 19px;
  margin-left: 9px;
  display: grid;
  place-items: center;
  background: #cb4d4c;
}
.winclose svg { width: 9px; height: 9px; }

.toolbar {
  height: 32px;
  flex: none;
  display: flex;
  align-items: center;
  padding: 4px 0 0 11px;
  background: #f1eff0;
}
.nav { width: 14px; height: 14px; margin-right: 14px; }
.nav + .nav + .nav { margin-right: 11px; }
.omnibox {
  width: 1792px;
  height: 28px;
  display: flex;
  align-items: center;
  padding: 0 7px 0 7px;
  background: #fff;
  border: 1px solid #a8a8a8;
  border-radius: 2px;
}
.info { width: 14px; height: 14px; margin-right: 6px; }
.url {
  flex: 1;
  font: 13.800px/20px "Open Sans", "Noto Sans", sans-serif;
  letter-spacing: -.35px;
  color: #808080;
  white-space: nowrap;
}
.url b { font-weight: 400; color: #222; }
.star { width: 14px; height: 14px; }
.menu { width: 4px; height: 14px; margin-left: 17px; }

.bookmarks {
  height: 29px;
  flex: none;
  display: flex;
  padding: 0 0 1px 11px;
  background: #f1eff0;
  border-bottom: 1px solid #b0b0b0;
  font: 11.800px/18px "Open Sans", "Noto Sans", sans-serif;
  letter-spacing: -.3px;
  color: #333;
}
.bookmarks a { display: flex; align-items: center; gap: 7px; padding-right: 10px; white-space: nowrap; }
.bookmarks span { flex: 1; mask-image: linear-gradient(90deg, #000 80%, rgba(0, 0, 0, .3) 97%); }
.bookmarks .m1 span, .bookmarks .m2 span { mask-image: none; }
.bookmarks svg { width: 13px; height: 14px; }
.bookmarks .m1 { width: 98px; }
.bookmarks .m2 { width: 59px; padding-right: 12px; letter-spacing: 0; }
.bookmarks .m3 { width: 127px; }
.bookmarks .m4, .bookmarks .m8 { width: 147px; gap: 7px; }
.bookmarks .m5 { width: 150px; gap: 5px; }
.bookmarks .m6 { width: 151px; gap: 5px; }
.bookmarks .m7 { width: 152px; gap: 6px; }
.bookmarks .m9 { width: 149px; gap: 6px; }
.bookmarks .m2 svg, .bookmarks .m3 svg { width: 12px; }
.bookmarks .m4 svg, .bookmarks .m8 svg { width: 11px; }
.bookmarks .m5 svg, .bookmarks .m6 svg { width: 16px; height: 16px; }
.bookmarks .m7 svg { width: 14px; }
.bookmarks .m9 svg { width: 15px; height: 16px; }

/* page */
.viewport { height: 950px; flex: none; display: flex; overflow: hidden; }
.page { width: 1903px; overflow: hidden; }
.topbar { height: 41px; display: flex; padding: 0 20px 0 18px; align-items: center; }
.logo { width: 33px; height: 36px; margin-top: 3px; }
.brand {
  width: 122px;
  margin: -5px auto 0 5px;
  color: #fff;
  font: 31px/1 "DejaVu Serif", serif;
  letter-spacing: 0;
  -webkit-text-stroke: .7px #444;
}
.search {
  width: 270px;
  height: 24px;
  margin-top: -5px;
  display: flex;
  align-items: center;
  padding-left: 2px;
  gap: 3px;
  border: 1px solid #aaa;
  border-radius: 3px;
  color: #a0a0a0;
  font: 13.200px/18px "Noto Sans", sans-serif;
}
.search svg { width: 16px; height: 16px; }
.help { width: 16px; height: 16px; margin: -3px 0 0 4px; }
.user, .logout {
  color: #fff;
  font: 13.500px/1 "DejaVu Sans", sans-serif;
  -webkit-text-stroke: .6px #444;
  white-space: nowrap;
}
.user { width: 73px; margin-left: 26px; letter-spacing: .5px; }
.logout { width: 99px; letter-spacing: .6px; }
.crumbs {
  height: 27px;
  display: flex;
  align-items: center;
  padding: 0 27px 0 19px;
  background: #f6faf4;
  border-bottom: 1px solid #ccd0cb;
  color: #4d545d;
}
.crumbs i {
  width: 4px;
  height: 8px;
  margin: 0 17px 0 22px;
  background: #aaa;
  clip-path: polygon(0 0, 100% 50%, 0 100%);
}
.job { letter-spacing: .13px; }
.refresh {
  margin-left: auto;
  color: #204a87;
  font: 8.200px/1 "DejaVu Sans", sans-serif;
  text-decoration: underline;
}
.columns { display: flex; }
aside { width: 375px; flex: none; padding: 12px 30px 0 15px; }
.tasks { list-style: none; margin: 0; padding: 0; }
.tasks li { height: 32px; display: flex; align-items: center; gap: 6px; padding-left: 2px; color: #204a87; }
.tasks .seen { color: #5c3566; }
.tasks .wide { letter-spacing: .18px; }
.tasks .current { font-weight: 700; letter-spacing: .15px; }
.tasks svg { width: 24px; height: 24px; }
.history { margin-top: 19px; height: 151px; border: 1px solid #e6e6e6; border-radius: 4px; overflow: hidden; }
.hhead { height: 35px; display: flex; align-items: center; padding: 0 26px 2px 15px; background: #eaeaea; }
.storm { width: 16px; height: 16px; margin-right: 14px; }
.hhead a { margin-left: auto; color: #204a87; font-weight: 700; text-decoration: underline; }
.dash { width: 12px; height: 4px; margin: 2px 0 0 5px; background: #a4c0e4; border: 1px solid #3465a4; }
.find {
  height: 25px;
  margin: 11px 10px 9px;
  display: flex;
  justify-content: space-between;
  align-items: center;
  padding: 0 5px 0 6px;
  border: 1px solid #9aa59a;
  color: #a5a5a5;
}
.build { height: 26px; display: flex; align-items: center; padding: 0 0 3px 8px; background: #fcfafc; color: #777; font-size: 12px; letter-spacing: .06px; }
.build svg { width: 13px; height: 13px; }
.build b { width: 60px; margin-left: 5px; color: #333; }
.feeds {
  height: 38px;
  margin-top: 7px;
  display: flex;
  justify-content: flex-end;
  align-items: center;
  gap: 4px;
  padding: 0 15px 2px 0;
  background: #eaeaea;
  color: #204a87;
  text-decoration: underline;
}
.feeds svg { width: 16px; height: 16px; }
main { width: 1513px; }
h1 { height: 72px; margin: 0; padding: 30px 0 0 15px; font-size: 27.800px; line-height: 1; }
.table { border: 1px solid #b5b0b5; height: 704px; }
.row {
  height: 27px;
  display: grid;
  grid-template-columns: 32px 161px 77px 1fr;
  align-items: center;
  padding-bottom: 2px;
  white-space: nowrap;
}
.row span:last-child { letter-spacing: .08px; }
.row .caps:last-child { letter-spacing: .01px; }
.th { background: #eaeaea; }
.row i { width: 12px; height: 12px; margin: -2px 0 0 8px; }
.row .on, .row .off { border: 1px solid #aaa; border-radius: 2px; background: linear-gradient(#f1f1f1, #dedede); }
.row .on { display: grid; place-items: center; }
.on::before {
  content: "";
  width: 4px;
  height: 8px;
  margin-top: -3px;
  border: solid #333;
  border-width: 0 2px 2px 0;
  transform: rotate(40deg);
}
.release {
  width: 119px;
  height: 22px;
  margin: 20px 0 0 15px;
  padding: 0;
  display: block;
  border: 1px solid #666;
  border-radius: 2px;
  background: linear-gradient(#f4f4f4, #dcdcdc);
  color: #222;
  font: 14px/1 "Liberation Sans", Arial, sans-serif;
  letter-spacing: .1px;
}
.svn { padding-top: 50px; }
.scroll { width: 17px; display: flex; flex-direction: column; align-items: center; background: #f1f1f1; padding: 7px 0 8px; }
.scroll svg { width: 8px; height: 4px; }
.thumb { width: 13px; height: 380px; margin-top: 6px; background: #c1c1c1; }
.scroll .down { margin-top: auto; }

/* desktop taskbar */
.taskbar { position: relative; height: 40px; flex: none; display: flex; color: #fff; font-family: "Open Sans", "Noto Sans", sans-serif; }
.wallpaper { position: absolute; inset: 0; width: 1920px; height: 40px; }
.start { position: relative; width: 52px; padding: 7px 0 0 12px; }
.start svg { width: 26px; height: 26px; }
.apps { position: relative; display: flex; gap: 3px; padding-top: 1px; }
.app {
  width: 59px;
  height: 38px;
  display: grid;
  place-items: center;
  background: #c99a52;
  border: 1px solid #e2bf86;
}
.app svg { width: 32px; height: 31px; }
.stack { background: linear-gradient(90deg, #c99a52 52px, #e2bf86 52px 53px, #a97325 53px 54px, #c99a52 54px); padding-right: 6px; }
.double { padding-right: 9px; }
.flat { background: none; border-color: transparent; }
.current.app { background: #d2ae7d; border: 1px solid #fff; }
.tray { position: relative; margin-left: auto; display: flex; align-items: center; gap: 8px; padding-right: 12px; }
.tray svg { width: 16px; height: 16px; margin-top: 2px; }
.lang { margin: 0 2px 0 6px; font-size: 11.500px; }
.clock { width: 60px; display: flex; flex-direction: column; align-items: center; font-size: 11.300px; line-height: 17px; white-space: nowrap; }
```
